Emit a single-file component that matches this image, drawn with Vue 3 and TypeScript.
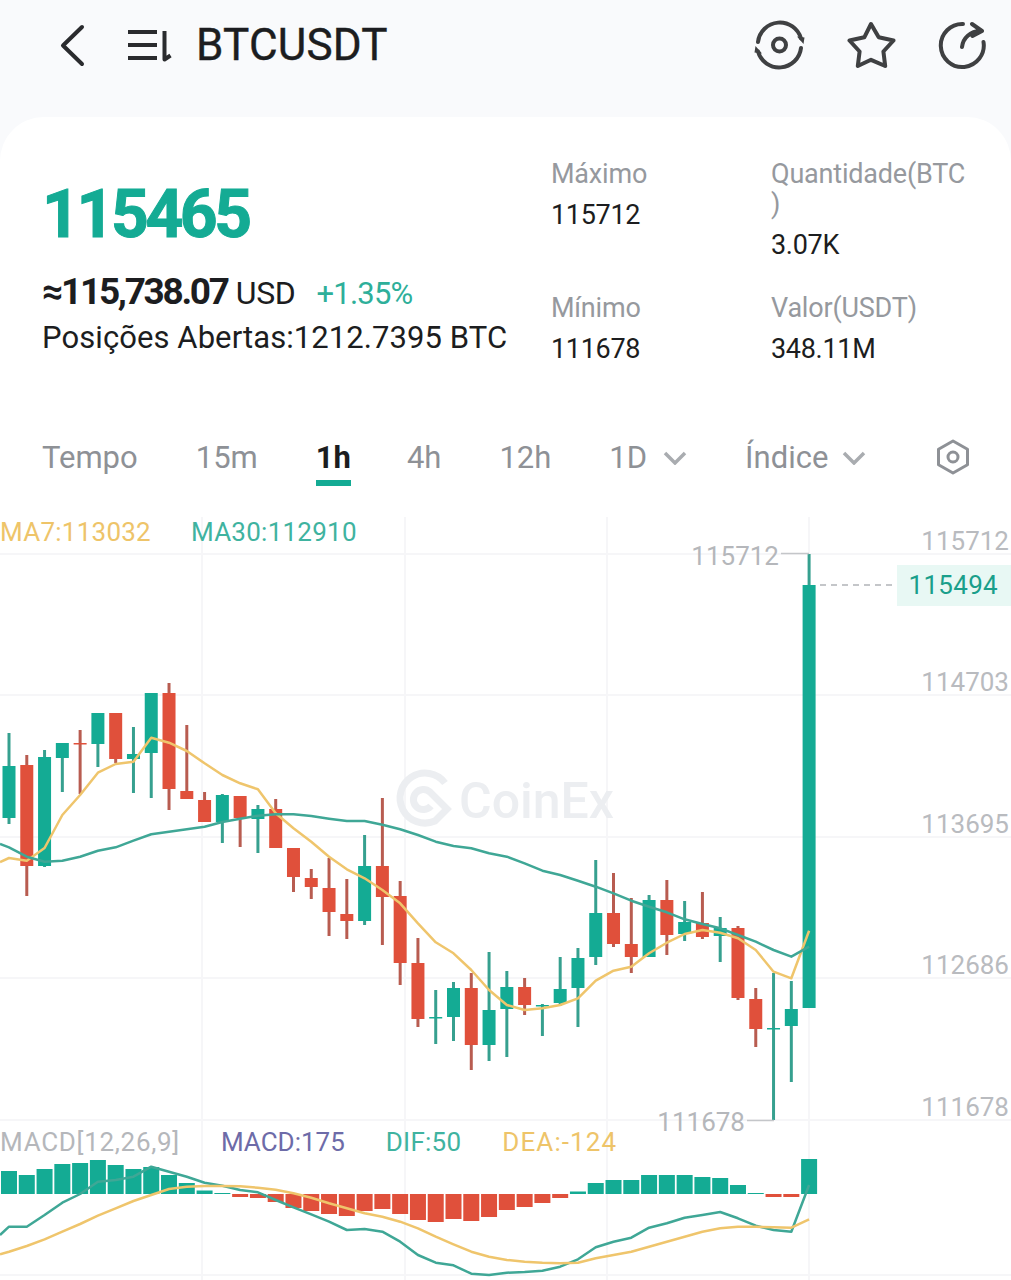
<template>
  <div class="page">
    <header class="topbar">
      <svg class="ico back" viewBox="60 22 26 46"><path d="M82 27 63 45.500 82 64" /></svg>
      <svg class="ico list" viewBox="126 26 48 38">
        <path d="M128 32h29M128 45h29M128 58h29M164.500 31v28.500l6-4" />
      </svg>
      <h1 class="symbol">BTCUSDT</h1>
      <div class="actions">
        <svg class="ico action" viewBox="754 19 52 52">
          <circle cx="780.500" cy="45" r="6.500" />
          <path d="M759 42a22 22 0 0 1 43-3.500M802 48a22 22 0 0 1-43 3.500" />
          <path class="solid" d="M798 36.500l7.500 1-1 6.500zM763 53.500l-7.500-1 1-6.500z" />
        </svg>
        <svg class="ico action star" viewBox="847 21 50 50">
          <path d="M871 25l7.700 13.300 14.800 3.200-10.100 11 1.800 14.500L871 60.800 857.800 67l1.800-14.500-10.100-11 14.800-3.200z" />
        </svg>
        <svg class="ico action" viewBox="937 20 50 50">
          <path d="M964 24a21.500 21.500 0 1 0 20.500 18M963 47c1-9 8-15.500 19-16.500M973 24l10 7-9.500 5" />
        </svg>
      </div>
    </header>

    <main class="card">
      <section class="info">
        <div class="summary">
          <div class="last-price">115465</div>
          <div class="fiat-row">
            <span class="fiat">≈115,738.07</span>
            <span class="unit">USD</span>
            <span class="change">+1.35%</span>
          </div>
          <div class="open-interest">Posições Abertas:1212.7395 BTC</div>
        </div>
        <dl class="stats">
          <div v-for="s in stats" :key="s.label" class="stat">
            <dt>{{ s.label }}</dt>
            <dd>{{ s.value }}</dd>
          </div>
        </dl>
      </section>

      <nav class="tabs">
        <span v-for="t in tabs" :key="t.label" class="tab" :class="{ on: t.on, menu: t.menu, wide: t.wide }">
          {{ t.label }}
          <svg v-if="t.menu" class="caret" viewBox="0 0 24 14"><path d="M2 2l10 10L22 2" /></svg>
        </span>
        <svg class="hex" viewBox="0 0 34 36">
          <path d="M17 2l14.500 8.300v15.400L17 34 2.500 25.700V10.300z" />
          <circle cx="17" cy="18" r="5" />
        </svg>
      </nav>

      <section class="chart">
        <div class="legend ma">
          <span class="c-yellow">MA7:113032</span>
          <span class="c-teal">MA30:112910</span>
        </div>
        <div class="legend macd">
          <span class="c-grey">MACD[12,26,9]</span>
          <span class="c-purple">MACD:175</span>
          <span class="c-teal">DIF:50</span>
          <span class="c-yellow dea">DEA:-124</span>
        </div>

        <svg class="plot" viewBox="0 517 1011 763">
          <g class="grid">
            <line v-for="y in gridY" :key="y" x1="0" x2="1011" :y1="y" :y2="y" />
            <line v-for="x in gridX" :key="x" :x1="x" :x2="x" y1="517" y2="1280" />
          </g>

          <g class="mark">
            <path d="M445 783A25 25 0 1 0 435 821L447 809 430 792A10 10 0 1 0 431 806" />
            <text x="459" y="818">CoinEx</text>
          </g>

          <g v-for="(c, i) in candles" :key="i">
            <line class="wick" :class="c[0]" :x1="cx(i)" :x2="cx(i)" :y1="c[1]" :y2="c[4]" />
            <rect class="body" :class="c[0]" :x="cx(i) - 6.500" :y="c[2]" width="13" :height="Math.max(c[3] - c[2], 1.500)" />
          </g>
          <polyline class="line yellow" :points="linePoints(ma7, 862)" />
          <polyline class="line teal" :points="linePoints(ma30, 844)" />

          <rect v-for="(v, i) in macd" :key="i" class="body" :class="v > 0 ? 'g' : 'r'" :x="cx(i) - 8"
            :y="v > 0 ? 1194 - v : 1194" width="16" :height="Math.abs(v)" />
          <polyline class="line teal" :points="linePoints(dif, 1235)" />
          <polyline class="line yellow" :points="linePoints(dea, 1254.300)" />

          <text v-for="a in axis" :key="a.t" class="axis" x="1009" :y="a.y">{{ a.t }}</text>

          <text class="peak" x="779" y="565">115712</text>
          <line class="leader" x1="781" x2="809" y1="553.500" y2="553.500" />
          <text class="peak" x="745" y="1131">111678</text>
          <line class="leader" x1="747" x2="774" y1="1120.500" y2="1120.500" />

          <line class="dash" x1="820" x2="895" y1="585" y2="585" />
          <rect class="tag" x="897" y="565" width="114" height="41" />
          <text class="tag-text" x="998" y="594">115494</text>
        </svg>
      </section>
    </main>
  </div>
</template>

<script setup lang="ts">
type Candle = ['g' | 'r', number, number, number, number]

const stats = [
  { label: 'Máximo', value: '115712' },
  { label: 'Quantidade(BTC)', value: '3.07K' },
  { label: 'Mínimo', value: '111678' },
  { label: 'Valor(USDT)', value: '348.11M' },
]

const tabs = [
  { label: 'Tempo' },
  { label: '15m' },
  { label: '1h', on: true },
  { label: '4h' },
  { label: '12h' },
  { label: '1D', menu: true },
  { label: 'Índice', menu: true, wide: true },
]

const gridY = [554, 695, 837, 978, 1120, 1275]
const gridX = [202, 405, 607, 809]

const axis = [
  { t: '115712', y: 550 },
  { t: '114703', y: 691 },
  { t: '113695', y: 833 },
  { t: '112686', y: 974 },
  { t: '111678', y: 1116 },
]

// color, wick top, body top, body bottom, wick bottom
const candles: Candle[] = [
  ['g', 733, 766, 818, 824], ['r', 755, 765, 866, 896], ['g', 750, 757, 866, 867], ['g', 743, 743, 758, 792],
  ['r', 730, 743, 743, 794], ['g', 713, 713, 744, 767], ['r', 713, 713, 759, 763], ['g', 727, 754, 759, 793],
  ['g', 693, 693, 753, 798], ['r', 683, 693, 789, 810], ['r', 725, 791, 799, 799], ['r', 792, 800, 822, 822],
  ['g', 794, 795, 822, 843], ['r', 796, 796, 818, 847], ['g', 805, 809, 819, 853], ['r', 799, 809, 848, 848],
  ['r', 848, 848, 877, 892], ['r', 869, 878, 887, 899], ['r', 858, 888, 912, 936], ['r', 879, 914, 921, 939],
  ['g', 835, 866, 921, 925], ['r', 798, 866, 897, 945], ['r', 881, 896, 963, 985], ['r', 938, 963, 1019, 1027],
  ['g', 990, 1017, 1017, 1044], ['g', 982, 988, 1017, 1041], ['r', 973, 988, 1045, 1070], ['g', 952, 1010, 1045, 1061],
  ['g', 971, 987, 1009, 1057], ['r', 978, 987, 1005, 1015], ['g', 1004, 1005, 1005, 1036], ['g', 957, 989, 1003, 1006],
  ['g', 948, 958, 988, 1027], ['g', 860, 913, 957, 965], ['r', 873, 913, 944, 947], ['r', 898, 944, 957, 973],
  ['g', 895, 900, 957, 957], ['r', 880, 900, 935, 955], ['g', 901, 922, 934, 941], ['r', 892, 923, 937, 939],
  ['g', 917, 928, 936, 962], ['r', 926, 928, 998, 1000], ['r', 988, 999, 1029, 1047], ['g', 973, 1028, 1028, 1120],
  ['g', 981, 1009, 1026, 1082], ['g', 554, 585, 1008, 1008],
]

const ma7 = [
  858, 860.700, 848, 815, 795, 772.700, 764, 761.700, 737.700, 742.700, 751, 763.300, 775, 783.300, 789.300, 813.300,
  828.300, 841.700, 856.700, 869.300, 878.300, 890, 903.300, 923.300, 942.300, 953.300, 970, 990, 1005, 1010, 1008.300,
  1005, 998.300, 980.700, 970.700, 966.700, 953.300, 942.700, 934, 930, 932.700, 938.300, 950, 971.700, 978.300, 930.700,
]
const ma30 = [
  847.300, 856.700, 861.700, 860.700, 856.700, 850.700, 847.300, 840.700, 834.300, 831.700, 829.300, 826.700, 822, 818.700,
  815.700, 814.300, 814.300, 816, 818.700, 821, 821, 824.700, 829.300, 835, 841.700, 846, 848.300, 853.300, 856.700, 863.300,
  870.700, 875, 880.700, 886.700, 893.300, 900.700, 906.700, 912.300, 919.300, 924, 928.300, 935, 941.700, 950, 956.700, 946.700,
]
const macd = [
  23, 19, 25, 30, 31, 34, 29, 25, 27, 19, 11, 3.500, 1, -3, -4, -8, -14, -17, -20, -22, -17, -15, -20, -26, -28, -25, -27,
  -23, -16, -13, -9, -4, 2.500, 11, 14, 14, 19, 19, 19, 17, 16, 9, 1, -3, -3, 35,
]
const dif = [
  1226.700, 1226.700, 1215, 1202.700, 1194, 1181.700, 1180, 1176.700, 1166.700, 1171.700, 1176.700, 1182.700, 1185.700, 1190,
  1192.300, 1200, 1207.300, 1214.300, 1221.700, 1230, 1229, 1231.700, 1241.700, 1255, 1262.700, 1265.300, 1273.700, 1275,
  1272.700, 1272, 1270.700, 1266.700, 1259.300, 1247.300, 1241.700, 1237.700, 1227.700, 1223.300, 1217.700, 1215, 1212,
  1218.300, 1225.700, 1230, 1231.700, 1185,
]
const dea = [
  1251.700, 1246, 1239.300, 1231.700, 1224, 1215.700, 1208.300, 1201, 1195, 1189, 1186.700, 1186, 1186, 1186.300, 1187.700,
  1189.700, 1193.300, 1197.700, 1203.300, 1208.300, 1213.300, 1216.700, 1221.700, 1228.300, 1236.700, 1244.300, 1251.700,
  1256.700, 1260, 1261.700, 1262.700, 1263.300, 1262.700, 1258.300, 1255, 1251.700, 1246.700, 1241.700, 1236.700, 1231.700,
  1228.300, 1226.700, 1226.700, 1227.300, 1227.700, 1219.300,
]

const cx = (i: number) => 9 + i * 17.78

function linePoints(ys: number[], startY: number) {
  return [`0,${startY}`, ...ys.map((y, i) => `${cx(i)},${y}`)].join(' ')
}
</script>

<style>
html,
body {
  margin: 0;
  background: #fff;
}
</style>

<style scoped>
.page {
  width: 1011px;
  height: 1280px;
  overflow: hidden;
  background: #f9fafc;
  font-family: Roboto, 'Noto Sans', sans-serif;
  color: #1c1d20;
}

.topbar {
  display: flex;
  align-items: center;
  height: 117px;
  padding: 0 0 28px 60px;
  box-sizing: border-box;
}

.ico {
  flex: none;
  fill: none;
  stroke: #2a2b2e;
  stroke-width: 4;
  stroke-linecap: round;
  stroke-linejoin: round;
}
.back { width: 26px; height: 46px; }
.list { width: 48px; height: 38px; margin-left: 40px; stroke-linecap: butt; }
.symbol {
  margin: 0 0 0 22px;
  font-size: 44px;
  font-weight: 400;
  letter-spacing: 0.2px;
  line-height: 50px;
  -webkit-text-stroke: 0.4px #1c1d20;
}
.actions {
  display: flex;
  align-items: center;
  gap: 41px;
  margin-left: auto;
  margin-right: 25px;
}
.action { width: 52px; height: 52px; stroke: #3f4042; }
.action.star { width: 50px; height: 50px; margin: 0 -2px 0 1px; }
.action:last-child { width: 50px; height: 50px; }
.solid { fill: #3f4042; stroke: none; }

.card {
  background: #fff;
  border-radius: 44px 44px 0 0;
}

.info {
  display: flex;
  padding: 42px 0 0 42px;
}
.summary {
  width: 509px;
  flex: none;
  margin-top: 21px;
}
.last-price {
  font-size: 66px;
  font-weight: 700;
  line-height: 70px;
  letter-spacing: -3.4px;
  color: #14ab94;
  -webkit-text-stroke: 1px #14ab94;
}
.fiat-row {
  display: flex;
  align-items: baseline;
  margin-top: 19px;
  line-height: 45px;
}
.fiat {
  font-size: 37px;
  font-weight: 700;
  letter-spacing: -2.3px;
}
.unit {
  margin-left: 8px;
  font-size: 32px;
  letter-spacing: -0.3px;
}
.change {
  margin-left: 21px;
  font-size: 31px;
  letter-spacing: -0.8px;
  color: #2eaf9a;
}
.open-interest {
  font-size: 31px;
  line-height: 44px;
  letter-spacing: 0.08px;
}

.stats {
  display: grid;
  grid-template-columns: 220px 198px;
  row-gap: 33px;
  margin: 0;
}
.stat dt {
  font-size: 27px;
  line-height: 30px;
  color: #96999e;
  line-break: anywhere;
  letter-spacing: -0.2px;
}
.stat dd {
  margin: 11px 0 0;
  font-size: 27px;
  line-height: 30px;
  letter-spacing: -0.3px;
}

.tabs {
  display: flex;
  align-items: flex-start;
  gap: 58px;
  height: 79px;
  padding: 74px 0 0 42px;
  box-sizing: content-box;
  font-size: 31px;
  color: #8e9196;
}
.tab {
  position: relative;
  display: flex;
  align-items: center;
  line-height: 40px;
}
.tab.on {
  margin-right: -2px;
  font-weight: 700;
  color: #1c1d20;
}
.tab.on::after {
  content: '';
  position: absolute;
  left: 0;
  right: 0;
  top: 42px;
  height: 6px;
  background: #14ab94;
}
.caret {
  width: 24px;
  height: 14px;
  margin-left: 16px;
  fill: none;
  stroke: #a9acb0;
  stroke-width: 3.500;
}
.tab.wide .caret { margin-left: 14px; }
.hex {
  width: 34px;
  height: 36px;
  margin: 1px 0 0 12px;
  fill: none;
  stroke: #8e9196;
  stroke-width: 3;
  stroke-linejoin: round;
}

.chart {
  position: relative;
  height: 763px;
}
.plot {
  display: block;
  width: 1011px;
  height: 763px;
}
.legend {
  position: absolute;
  left: 0;
  z-index: 1;
  display: flex;
  font-size: 26px;
  line-height: 30px;
  letter-spacing: 0.25px;
  white-space: nowrap;
}
.legend.ma { top: 0; gap: 40px; }
.legend.macd { top: 610px; gap: 41px; }
.legend .c-grey { letter-spacing: 0.7px; }
.legend .c-purple { letter-spacing: 0; }
.legend .dea { letter-spacing: 1.1px; }
.c-yellow { color: #eec469; }
.c-teal { color: #3fb3a0; }
.c-grey { color: #b5b7bb; }
.c-purple { color: #6d6ba8; }

.grid line {
  stroke: #f6f6f8;
  stroke-width: 2;
}
.mark path {
  fill: none;
  stroke: #eceef1;
  stroke-width: 7;
}
.mark text {
  font-size: 50px;
  font-weight: 500;
  fill: #eceef1;
}
.wick { stroke-width: 3; }
.wick.g { stroke: #36a08f; }
.wick.r { stroke: #b85c50; }
.body.g { fill: #14ab94; }
.body.r { fill: #e0503b; }
.line {
  fill: none;
  stroke-width: 2.500;
  stroke-linejoin: round;
}
.line.yellow { stroke: #efc56c; }
.line.teal { stroke: #3fa796; }
.axis {
  font-size: 26px;
  text-anchor: end;
  fill: #b9bbbf;
}
.peak {
  font-size: 26px;
  text-anchor: end;
  fill: #b5b7bb;
}
.leader {
  stroke: #c4c6c9;
  stroke-width: 1.500;
}
.dash {
  stroke: #c4c6c9;
  stroke-width: 2;
  stroke-dasharray: 6 5;
}
.tag { fill: #e8f8f4; }
.tag-text {
  font-size: 26px;
  letter-spacing: 0.3px;
  text-anchor: end;
  fill: #1a9f8b;
}
</style>
